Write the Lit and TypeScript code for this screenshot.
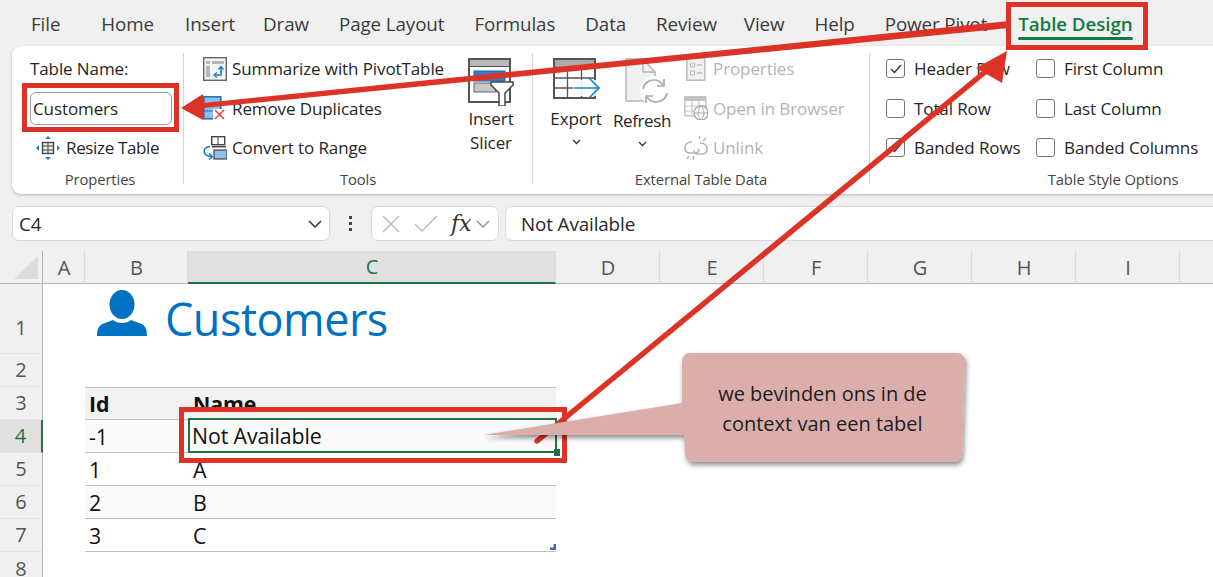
import { LitElement, html, svg, css } from 'lit';
import { customElement } from 'lit/decorators.js';

const tabs = ['File', 'Home', 'Insert', 'Draw', 'Page Layout', 'Formulas', 'Data', 'Review', 'View', 'Help', 'Power Pivot'];
const columns = ['A', 'B', 'C', 'D', 'E', 'F', 'G', 'H', 'I', ''];
const tableRows = [
  { row: 3, id: 'Id', name: 'Name', kind: 'head' },
  { row: 4, id: '-1', name: 'Not Available', kind: 'band' },
  { row: 5, id: '1', name: 'A', kind: 'plain' },
  { row: 6, id: '2', name: 'B', kind: 'band' },
  { row: 7, id: '3', name: 'C', kind: 'plain' },
];

const icon = (w: number, h: number, body: unknown) =>
  html`<svg width=${w} height=${h} viewBox="0 0 ${w} ${h}" fill="none">${body}</svg>`;

const icons = {
  resize: icon(24, 24, svg`
    <rect x="6.5" y="6.5" width="11" height="11" fill="#eee" stroke="#444" stroke-width="1.4"/>
    <path d="M6.5 10h11M6.5 14h11M12 6.5v11" stroke="#444"/>
    <path d="M12 0l3 3H9zM12 24l3-3H9zM0 12l3-3v6zM24 12l-3-3v6z" fill="#1c7fc4"/>`),
  pivot: icon(24, 24, svg`
    <rect x=".7" y=".7" width="22.6" height="22.6" fill="#f4f4f4" stroke="#666" stroke-width="1.4"/>
    <path d="M3 4h4v3H3zM9 4h12v3H9zM3 9h4v11H3z" fill="#b5b5b5"/>
    <path d="M18 10v8h-6" stroke="#1c7fc4" stroke-width="1.6"/>
    <path d="M15.5 12.5L18 9.500l2.500 3M14 15.500L11 18l3 2.500" stroke="#1c7fc4" stroke-width="1.3"/>`),
  dupes: icon(24, 24, svg`
    <rect x=".8" y=".8" width="17" height="22" fill="#8cc0ea" stroke="#1b6fb5" stroke-width="1.5"/>
    <path d="M1 8h17M1 15h17" stroke="#1b6fb5"/>
    <rect x="10" y="13" width="14" height="11" fill="#fff"/>
    <path d="M12 14l9 9M21 14l-9 9" stroke="#e0453a" stroke-width="1.5"/>`),
  convert: icon(24, 24, svg`
    <rect x="8.700" y=".7" width="13" height="8" fill="#fff" stroke="#444" stroke-width="1.4"/>
    <path d="M15 1v8" stroke="#444"/>
    <path d="M9 10.700h14" stroke="#444" stroke-width="1.4"/>
    <rect x="11" y="14" width="13" height="9" fill="#8cc0ea" stroke="#444" stroke-width="1.2"/>
    <path d="M7 10.500C2 11 .5 14 1.500 17c.7 2 3 3.500 7.500 3.500M6 17.500l3.500 3-3.500 3" stroke="#1c7fc4" stroke-width="1.6"/>`),
  slicer: icon(46, 48, svg`
    <rect x="1" y="1" width="41" height="43" fill="#fff" stroke="#555" stroke-width="2"/>
    <rect x="2" y="2" width="39" height="6" fill="#b9b9b9"/>
    <path d="M1 8.500h41" stroke="#555"/>
    <rect x="6" y="13" width="31" height="10" fill="#2f80d0" stroke="#1c66ad"/>
    <rect x="6" y="25" width="22" height="9" fill="#c7c7c7" stroke="#666"/>
    <path d="M23 24h22v3l-8 8v13h-6V35l-8-8z" fill="#fff" stroke="#444" stroke-width="1.500"/>`),
  exportIcon: icon(47, 44, svg`
    <rect x="1" y="1" width="41" height="39" fill="#fff" stroke="#555" stroke-width="2"/>
    <rect x="2" y="2" width="39" height="7" fill="#ababab"/>
    <path d="M1 9.500h41M1 20h41M1 30h41M14.500 9v31M28.500 9v31" stroke="#555" stroke-width="1.300"/>
    <rect x="20" y="22" width="27" height="16" fill="#fff" fill-opacity=".85"/>
    <path d="M21 30h24M36 20l10 10-10 10" stroke="#1c8ad6" stroke-width="1.700"/>`),
  refresh: icon(44, 48, svg`
    <path d="M1 1h17l12 13v29H1z" fill="#f1f1f1" stroke="#b5b5b5" stroke-width="1.500"/>
    <path d="M18 1v13h12" stroke="#b5b5b5" stroke-width="1.500"/>
    <circle cx="30" cy="33" r="15" fill="#fff"/>
    <path d="M18 31c1-6 6-9 11-9 4 0 7 2 9 5M42 35c-1 6-6 9-11 9-4 0-7-2-9-5" stroke="#aaa" stroke-width="1.700"/>
    <path d="M39 21v7h-7M21 45v-7h7" stroke="#aaa" stroke-width="1.700"/>`),
  props: icon(20, 24, svg`
    <rect x=".8" y=".8" width="18" height="22.400" fill="#f1f1f1" stroke="#bbb" stroke-width="1.500"/>
    <path d="M4.500 6h4v4h-4zM4.500 14h4v4h-4z" stroke="#bbb"/>
    <path d="M11 8h5M11 16h5" stroke="#bbb" stroke-width="1.300"/>`),
  browser: icon(24, 24, svg`
    <rect x=".8" y=".8" width="21" height="19" fill="#fff" stroke="#c3c3c3" stroke-width="1.500"/>
    <rect x="1" y="1" width="21" height="4" fill="#c3c3c3"/>
    <path d="M1 10h21M1 15h21M8 5v15M15 5v15" stroke="#c3c3c3"/>
    <circle cx="17" cy="17" r="7" fill="#fff" stroke="#aaa" stroke-width="1.300"/>
    <path d="M10 17h14M17 10c-4 4-4 10 0 14M17 10c4 4 4 10 0 14" stroke="#aaa"/>`),
  unlink: icon(24, 24, svg`
    <path d="M8 6C3 6 1 9 1 12c0 3 2 5 5 5h5c3 0 4-2 4-4M16 7c5 0 7 3 7 6s-2 5-5 5h-4c-3 0-4-2-4-4"
      stroke="#b5b5b5" stroke-width="1.600"/>
    <path d="M15 3l1-3M19 5l3-3M5 20l-2 3M10 20l-1 4" stroke="#b5b5b5" stroke-width="1.500"/>`),
  person: icon(50, 46, svg`
    <ellipse cx="25" cy="14.500" rx="12.500" ry="14.500" fill="#0070c0"/>
    <path d="M0 46c0-8 2-11 8-13l8-3c4 4 14 4 18 0l8 3c6 2 8 5 8 13z" fill="#0070c0"/>`),
};

const chevron = html`<svg class="chev" width="9" height="6" viewBox="0 0 9 6" fill="none">
  <path d="M1 1l3.500 3.500L8 1" stroke="#333" stroke-width="1.300"/></svg>`;

@customElement('app-root')
export class AppRoot extends LitElement {
  static styles = css`
    :host {
      display: block;
      position: relative;
      width: 1213px;
      height: 577px;
      overflow: hidden;
      background: #f0f0f0;
      color: #262626;
      font-family: "Open Sans", "Noto Sans", sans-serif;
      font-size: 17px;
      letter-spacing: -0.1px;
    }
    .tabs {
      display: flex;
      height: 46px;
      align-items: center;
      padding: 2px 0 0 31px;
      box-sizing: border-box;
      white-space: nowrap;
    }
    .tab {
      font-size: 18.800px;
      color: #3b3b3b;
      margin-right: 30px;
    }
    .tab:nth-child(1) { margin-right: 41px; }
    .tab:nth-child(2) { margin-right: 31px; }
    .tab:nth-child(3) { margin-right: 28px; }
    .tab:nth-child(8) { margin-right: 27px; }
    .tab:nth-child(11) { margin-right: 31px; }
    .tab.active {
      position: relative;
      color: #107c41;
      font-weight: 600;
      margin: 0;
    }
    .tab.active::after {
      content: "";
      position: absolute;
      left: 0;
      right: 0;
      bottom: -3px;
      height: 3px;
      border-radius: 2px;
      background: #107c41;
    }
    .ribbon {
      display: flex;
      width: 1400px;
      height: 148px;
      margin-left: 12px;
      background: #fff;
      border-radius: 9px;
      box-shadow: 0 1px 3px rgba(0, 0, 0, 0.25);
    }
    .group {
      display: flex;
      flex-direction: column;
      box-sizing: content-box;
      margin: 7px 0 10px;
      border-right: 1px solid #d4d4d4;
    }
    .group.properties { width: 171px; }
    .group.tools { width: 348px; }
    .group.external { width: 336px; }
    .group.options { width: 486px; border: 0; }
    .group-body {
      flex: 1;
      display: flex;
      min-height: 0;
    }
    .group-label {
      text-align: center;
      font-size: 14.800px;
      line-height: 20px;
      margin: 3px 0 -5px;
      color: #444;
    }
    .properties .group-label { padding-left: 5px; }
    .stack {
      display: grid;
      grid-auto-rows: 39.500px;
      align-items: center;
      margin-top: -4px;
    }
    .properties .stack { padding-left: 18px; width: 142px; }
    .line {
      display: flex;
      align-items: center;
      gap: 5px;
      white-space: nowrap;
    }
    .resize { margin-left: 6px; gap: 6px; letter-spacing: -0.35px; }
    .name-input {
      box-sizing: border-box;
      width: 142px;
      height: 33px;
      padding-left: 2px;
      line-height: 31px;
      border: 1px solid #999;
      border-radius: 6px;
      color: #1f1f1f;
    }
    .tools .stack { padding-left: 19px; width: 266px; }
    .big {
      display: flex;
      flex-direction: column;
      align-items: center;
      line-height: 24px;
      text-align: center;
      padding-top: 5px;
    }
    .big svg:first-child { margin-bottom: 1px; }
    .slicer { width: 44px; }
    .export { margin-left: 18px; width: 50px; }
    .export svg:first-child { margin-bottom: 5px; }
    .refresh { margin-left: 11px; width: 60px; letter-spacing: -0.4px; }
    .refresh svg:first-child { margin: 0 0 3px 10px; }
    .chev { margin-top: 8px; }
    .external .stack { margin-left: 12px; }
    .slot {
      width: 24px;
      display: flex;
      justify-content: center;
    }
    .disabled { color: #b4b4b4; }
    .checks {
      display: grid;
      grid-template-columns: 150px auto;
      grid-auto-rows: 39.500px;
      align-items: center;
      padding-left: 16px;
      margin-top: -4px;
    }
    .check {
      display: flex;
      align-items: center;
      gap: 9px;
      white-space: nowrap;
    }
    .box {
      width: 19px;
      height: 19px;
      box-sizing: border-box;
      border: 1.500px solid #777;
      border-radius: 3px;
      display: flex;
      align-items: center;
      justify-content: center;
    }
    .formula-bar {
      display: flex;
      align-items: stretch;
      height: 35px;
      margin: 12px 0 10px 12px;
      font-size: 18.800px;
    }
    .field {
      flex: none;
      box-sizing: border-box;
      background: #fff;
      border: 1px solid #d9d9d9;
      border-radius: 7px;
      display: flex;
      align-items: center;
    }
    .name-box {
      width: 318px;
      padding: 0 7px 0 6px;
      justify-content: space-between;
    }
    .dots {
      flex: none;
      width: 41px;
      display: flex;
      flex-direction: column;
      align-items: center;
      justify-content: center;
      gap: 3px;
    }
    .dots i {
      width: 3px;
      height: 3px;
      background: #444;
    }
    .fx-box {
      width: 128px;
      padding-left: 9px;
    }
    .check-mark { margin-left: 13px; }
    .fx {
      font-family: "DejaVu Serif", "Liberation Serif", serif;
      font-style: italic;
      font-size: 22px;
      color: #333;
      margin: 0 5px 0 13px;
    }
    .formula {
      width: 760px;
      margin-left: 6px;
      padding-left: 15px;
    }
    .sheet {
      display: grid;
      grid-template-columns: 43px 42px 103px 368px repeat(7, 104px);
      grid-template-rows: 33px 70px repeat(6, 33px) 25px;
      background: #fff;
      font-size: 21.300px;
    }
    .corner {
      background: #f0f0f0;
      border-right: 1px solid #b4b4b4;
      border-bottom: 1px solid #b4b4b4;
      display: flex;
      padding: 5px 4px 4px 14px;
      box-sizing: border-box;
    }
    .corner::before {
      content: "";
      flex: 1;
      background: #dcdcdc;
      clip-path: polygon(100% 0, 100% 100%, 0 100%);
    }
    .col {
      background: #f0f0f0;
      border-right: 1px solid #dcdcdc;
      border-bottom: 1px solid #b4b4b4;
      padding-left: 1px;
      display: flex;
      align-items: center;
      justify-content: center;
      font-size: 20px;
      color: #555;
      box-sizing: border-box;
    }
    .col.on {
      background: #e0e0e0;
      color: #217346;
      border-bottom: 2px solid #217346;
    }
    .rowhead {
      grid-column: 1;
      background: #f0f0f0;
      border-right: 1px solid #b4b4b4;
      border-bottom: 1px solid #e2e2e2;
      display: flex;
      align-items: center;
      justify-content: center;
      font-size: 20px;
      line-height: 16px;
      color: #555;
      box-sizing: border-box;
    }
    .rowhead.first { padding-top: 18px; }
    .rowhead.cut { padding-top: 8px; border-bottom: 0; }
    .rowhead.on {
      background: #e0e0e0;
      color: #217346;
      border-right: 2px solid #217346;
    }
    .title {
      grid-column: 3 / 5;
      grid-row: 2;
      display: flex;
      align-items: flex-start;
      gap: 18px;
      padding: 6px 0 0 12px;
      color: #0070c0;
      font-size: 45px;
      letter-spacing: -0.5px;
      line-height: 58px;
    }
    .title svg { flex: none; }
    .cell {
      display: flex;
      align-items: center;
      box-sizing: border-box;
      color: #111;
      border-bottom: 1px solid #bfbfbf;
      letter-spacing: -0.1px;
    }
    .cell.a { grid-column: 3; padding-left: 4px; }
    .cell.b { grid-column: 4; padding-left: 5px; position: relative; }
    .cell.head { background: #f2f2f2; font-weight: 700; border-top: 1px solid #bfbfbf; }
    .cell.band { background: #fafafa; }
    .cell.selected {
      border: 2px solid #217346;
      padding-left: 2px;
      margin: -2px -1px 0 0;
    }
    .cell.selected::after {
      content: "";
      position: absolute;
      right: -5px;
      bottom: -5px;
      width: 6px;
      height: 7px;
      background: #217346;
    }
    .cell.last::after {
      content: "";
      position: absolute;
      right: 0;
      bottom: 1px;
      width: 6px;
      height: 6px;
      background: #4b5fbd;
      clip-path: polygon(100% 0, 100% 100%, 0 100%, 0 60%, 60% 60%, 60% 0);
    }
    .overlay {
      position: absolute;
      inset: 0;
      pointer-events: none;
    }
    .callout-text {
      position: absolute;
      left: 682px;
      top: 354px;
      width: 281px;
      height: 109px;
      display: flex;
      align-items: center;
      justify-content: center;
      text-align: center;
      font-size: 20px;
      line-height: 30px;
      color: #1d1d1d;
      letter-spacing: 0;
    }
  `;

  private line(ic: unknown, text: string, cls = '') {
    return html`<div class="line ${cls}">${ic}<span>${text}</span></div>`;
  }

  private check(label: string, on: boolean) {
    return html`<div class="check">
      <span class="box">${on
        ? html`<svg width="12" height="10" viewBox="0 0 12 10" fill="none"><path d="M1 5l3.500 3.500L11 1" stroke="#333" stroke-width="1.400"/></svg>`
        : ''}</span>
      <span>${label}</span>
    </div>`;
  }

  private renderRibbon() {
    return html`<div class="ribbon">
      <section class="group properties">
        <div class="group-body">
          <div class="stack">
            <div class="line">Table Name:</div>
            <div class="name-input">Customers</div>
            ${this.line(icons.resize, 'Resize Table', 'resize')}
          </div>
        </div>
        <div class="group-label">Properties</div>
      </section>
      <section class="group tools">
        <div class="group-body">
          <div class="stack">
            ${this.line(icons.pivot, 'Summarize with PivotTable')}
            ${this.line(icons.dupes, 'Remove Duplicates')}
            ${this.line(icons.convert, 'Convert to Range')}
          </div>
          <div class="big slicer">${icons.slicer}<span>Insert</span><span>Slicer</span></div>
        </div>
        <div class="group-label">Tools</div>
      </section>
      <section class="group external">
        <div class="group-body">
          <div class="big export">${icons.exportIcon}<span>Export</span>${chevron}</div>
          <div class="big refresh">${icons.refresh}<span>Refresh</span>${chevron}</div>
          <div class="stack disabled">
            ${this.line(html`<span class="slot">${icons.props}</span>`, 'Properties')}
            ${this.line(html`<span class="slot">${icons.browser}</span>`, 'Open in Browser')}
            ${this.line(html`<span class="slot">${icons.unlink}</span>`, 'Unlink')}
          </div>
        </div>
        <div class="group-label">External Table Data</div>
      </section>
      <section class="group options">
        <div class="group-body">
          <div class="checks">
            ${this.check('Header Row', true)}${this.check('First Column', false)}
            ${this.check('Total Row', false)}${this.check('Last Column', false)}
            ${this.check('Banded Rows', true)}${this.check('Banded Columns', false)}
          </div>
        </div>
        <div class="group-label">Table Style Options</div>
      </section>
    </div>`;
  }

  private renderFormulaBar() {
    return html`<div class="formula-bar">
      <div class="field name-box"><span>C4</span>
        <svg width="14" height="8" viewBox="0 0 14 8" fill="none"><path d="M1 1l6 6 6-6" stroke="#333" stroke-width="1.500"/></svg>
      </div>
      <div class="dots"><i></i><i></i><i></i></div>
      <div class="field fx-box">
        <svg width="20" height="20" viewBox="0 0 20 20" fill="none"><path d="M2 2l16 16M18 2L2 18" stroke="#bdbdbd" stroke-width="1.500"/></svg>
        <svg class="check-mark" width="24" height="18" viewBox="0 0 24 18" fill="none"><path d="M1 9l7 7L23 1" stroke="#bdbdbd" stroke-width="1.500"/></svg>
        <span class="fx">fx</span>
        <svg width="14" height="8" viewBox="0 0 14 8" fill="none"><path d="M1 1l6 6 6-6" stroke="#8a8a8a" stroke-width="1.400"/></svg>
      </div>
      <div class="field formula">Not Available</div>
    </div>`;
  }

  private renderSheet() {
    return html`<div class="sheet">
      <div class="corner"></div>
      ${columns.map((c) => html`<div class="col ${c === 'C' ? 'on' : ''}">${c}</div>`)}
      ${[1, 2, 3, 4, 5, 6, 7, 8].map(
        (n) => html`<div class="rowhead ${n === 4 ? 'on' : ''} ${n === 1 ? 'first' : ''} ${n === 8 ? 'cut' : ''}" style="grid-row:${n + 1}">${n}</div>`,
      )}
      <div class="title">${icons.person}<span>Customers</span></div>
      ${tableRows.map(
        (r) => html`
          <div class="cell a ${r.kind}" style="grid-row:${r.row + 1}">${r.id}</div>
          <div class="cell b ${r.kind} ${r.row === 4 ? 'selected' : ''} ${r.row === 7 ? 'last' : ''}" style="grid-row:${r.row + 1}">${r.name}</div>
        `,
      )}
    </div>`;
  }

  private renderOverlay() {
    return html`<svg class="overlay" width="1213" height="577" viewBox="0 0 1213 577" fill="none">
      <defs>
        <filter id="drop" x="-10%" y="-20%" width="120%" height="140%">
          <feDropShadow dx="1.500" dy="3" stdDeviation="2.500" flood-color="#000" flood-opacity="0.45"/>
        </filter>
      </defs>
      <path d="M1009 21V28L203 108V103Z" fill="#dc3326"/>
      <path d="M181 108L203 94V120Z" fill="#dc3326"/>
      <path d="M537 441L985 72" stroke="#dc3326" stroke-width="5.500" stroke-linecap="round"/>
      <path d="M1007 51L976 68L1002 83Z" fill="#dc3326"/>
      <rect x="24.500" y="85.500" width="152" height="44" stroke="#dc3326" stroke-width="5"/>
      <rect x="1008.500" y="4.500" width="137" height="43" stroke="#dc3326" stroke-width="5"/>
      <rect x="181.500" y="409.500" width="383" height="51" stroke="#dc3326" stroke-width="5"/>
      <path filter="url(#drop)" fill="#dbaeac"
        d="M690 353H957a8 8 0 0 1 8 8L962 454a8 8 0 0 1-8 8H693a8 8 0 0 1-8-8L684 435H483L682 403V361a8 8 0 0 1 8-8Z"/>
    </svg>`;
  }

  render() {
    return html`
      <nav class="tabs">
        ${tabs.map((t) => html`<span class="tab">${t}</span>`)}
        <span class="tab active">Table Design</span>
      </nav>
      ${this.renderRibbon()}
      ${this.renderFormulaBar()}
      ${this.renderSheet()}
      ${this.renderOverlay()}
      <div class="callout-text"><span>we bevinden ons in de<br />context van een tabel</span></div>
    `;
  }
}
